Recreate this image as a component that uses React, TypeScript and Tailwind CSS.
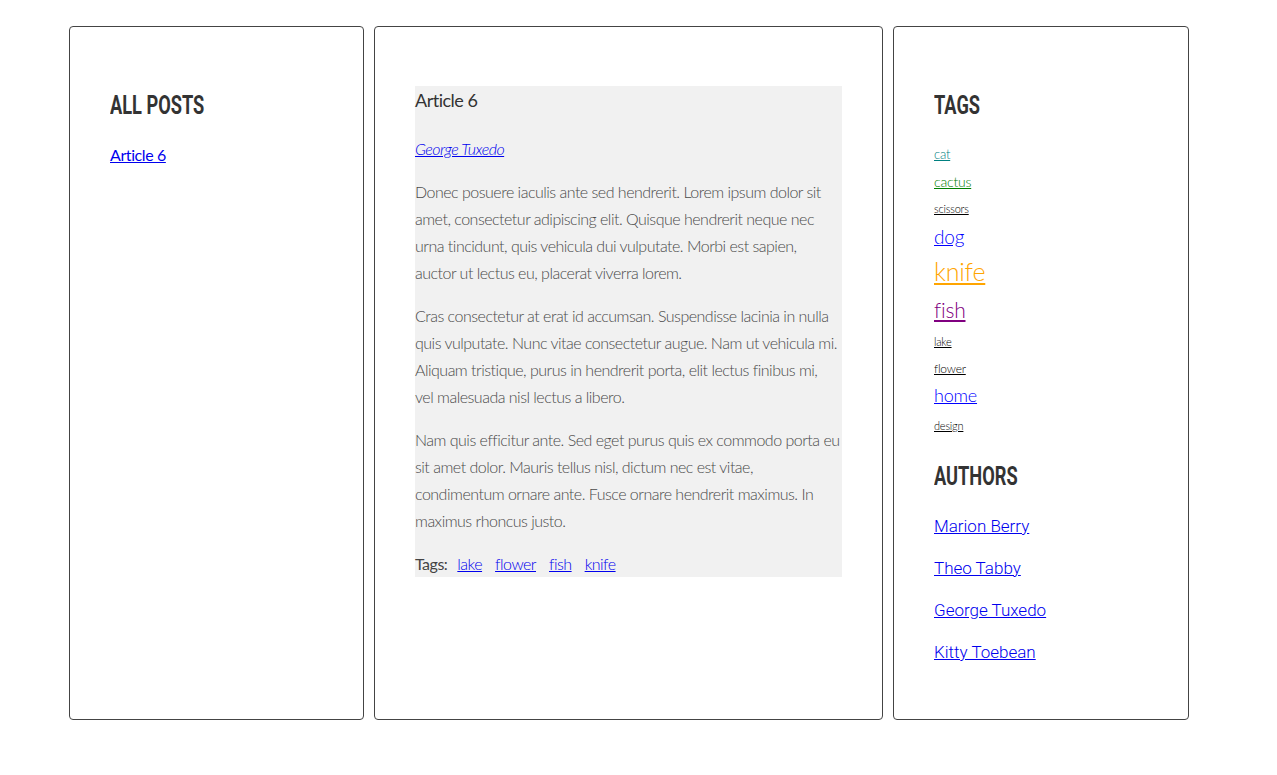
const body = "font-['Lato','Open_Sans',sans-serif]";
const heading =
    "inline-block origin-left scale-x-[0.7] font-['Roboto',sans-serif] font-bold text-[26px] leading-[36px] text-[#333] uppercase";

// paragraphs split at the same places the original wraps
const paragraphs = [
    [
        'Donec posuere iaculis ante sed hendrerit. Lorem ipsum dolor sit',
        'amet, consectetur adipiscing elit. Quisque hendrerit neque nec',
        'urna tincidunt, quis vehicula dui vulputate. Morbi est sapien,',
        'auctor ut lectus eu, placerat viverra lorem.',
    ],
    [
        'Cras consectetur at erat id accumsan. Suspendisse lacinia in nulla',
        'quis vulputate. Nunc vitae consectetur augue. Nam ut vehicula mi.',
        'Aliquam tristique, purus in hendrerit porta, elit lectus finibus mi,',
        'vel malesuada nisl lectus a libero.',
    ],
    [
        'Nam quis efficitur ante. Sed eget purus quis ex commodo porta eu',
        'sit amet dolor. Mauris tellus nisl, dictum nec est vitae,',
        'condimentum ornare ante. Fusce ornare hendrerit maximus. In',
        'maximus rhoncus justo.',
    ],
];

// tag cloud: size, line box and colour for each tag
const tags = [
    { name: 'cat', cls: 'text-[13px] leading-[27px] text-[#008080]' },
    { name: 'cactus', cls: 'text-[14px] leading-[27px] text-[#008000]' },
    { name: 'scissors', cls: 'text-[11px] leading-[27px] text-black' },
    { name: 'dog', cls: 'text-[19px] leading-[29px] text-[#0000ff]' },
    { name: 'knife', cls: 'text-[25px] leading-[41px] text-[#ffa500]' },
    { name: 'fish', cls: 'text-[21px] leading-[35px] text-[#800080]' },
    { name: 'lake', cls: 'text-[11px] leading-[29px] text-black' },
    { name: 'flower', cls: 'text-[12px] leading-[25px] text-black' },
    { name: 'home', cls: 'text-[18px] leading-[29px] text-[#0000ff]' },
    { name: 'design', cls: 'text-[11px] leading-[31px] text-black' },
];

const authors = ['Marion Berry', 'Theo Tabby', 'George Tuxedo', 'Kitty Toebean'];

function Panel({ width, children }: { width: string; children: React.ReactNode }) {
    return (
        <div className={`${width} h-[694px] shrink-0 border border-[#444] rounded-[4px] px-[40px] pt-[60px]`}>
            {children}
        </div>
    );
}

export default function App() {
    return (
        <div className={`${body} bg-white min-h-[775px] flex gap-[10px] pl-[69px] pt-[26px]`}>
            {/* All posts */}
            <Panel width="w-[295px]">
                <h2 className={heading}>All Posts</h2>
                <a href="#" className="block mt-[18px] text-[16px] leading-[27px] tracking-[-0.4px] text-[#0000ee] underline">
                    Article 6
                </a>
            </Panel>

            {/* Article */}
            <Panel width="w-[509px]">
                <div className="bg-[#f1f1f1] -mt-px tracking-[-0.5px]">
                    <h1 className="pt-[2px] text-[18px] leading-[25px] text-[#333]">Article 6</h1>
                    <a href="#" className="block mt-[22px] italic font-light text-[16px] leading-[27px] text-[#0000ee] underline">
                        George Tuxedo
                    </a>
                    {paragraphs.map((lines, i) => (
                        <p key={i} className="mt-[16px] text-[16px] leading-[27px] font-light text-[#4a4a4a] whitespace-nowrap">
                            {lines.map((l, j) => (
                                <span key={j} className="block">
                                    {l}
                                </span>
                            ))}
                        </p>
                    ))}
                    <div className="mt-[16px] text-[16px] leading-[27px] text-[#444] flex">
                        <span className="mr-[10px]">Tags:</span>
                        {['lake', 'flower', 'fish', 'knife'].map(t => (
                            <a key={t} href="#" className="mr-[13px] font-light text-[#0000ee] underline">
                                {t}
                            </a>
                        ))}
                    </div>
                </div>
            </Panel>

            {/* Tags + authors */}
            <Panel width="w-[296px]">
                <h2 className={heading}>Tags</h2>
                <div className="mt-[18px] flex flex-col items-start tracking-[-0.2px]">
                    {tags.map(t => (
                        <a key={t.name} href="#" className={`font-light underline ${t.cls}`}>
                            {t.name}
                        </a>
                    ))}
                </div>
                <h2 className={`${heading} mt-[17px]`}>Authors</h2>
                <div className="mt-[11px] flex flex-col items-start font-['Roboto',sans-serif]">
                    {authors.map(a => (
                        <a key={a} href="#" className="text-[17px] leading-[42px] font-light text-[#0000ee] underline">
                            {a}
                        </a>
                    ))}
                </div>
            </Panel>
        </div>
    );
}
